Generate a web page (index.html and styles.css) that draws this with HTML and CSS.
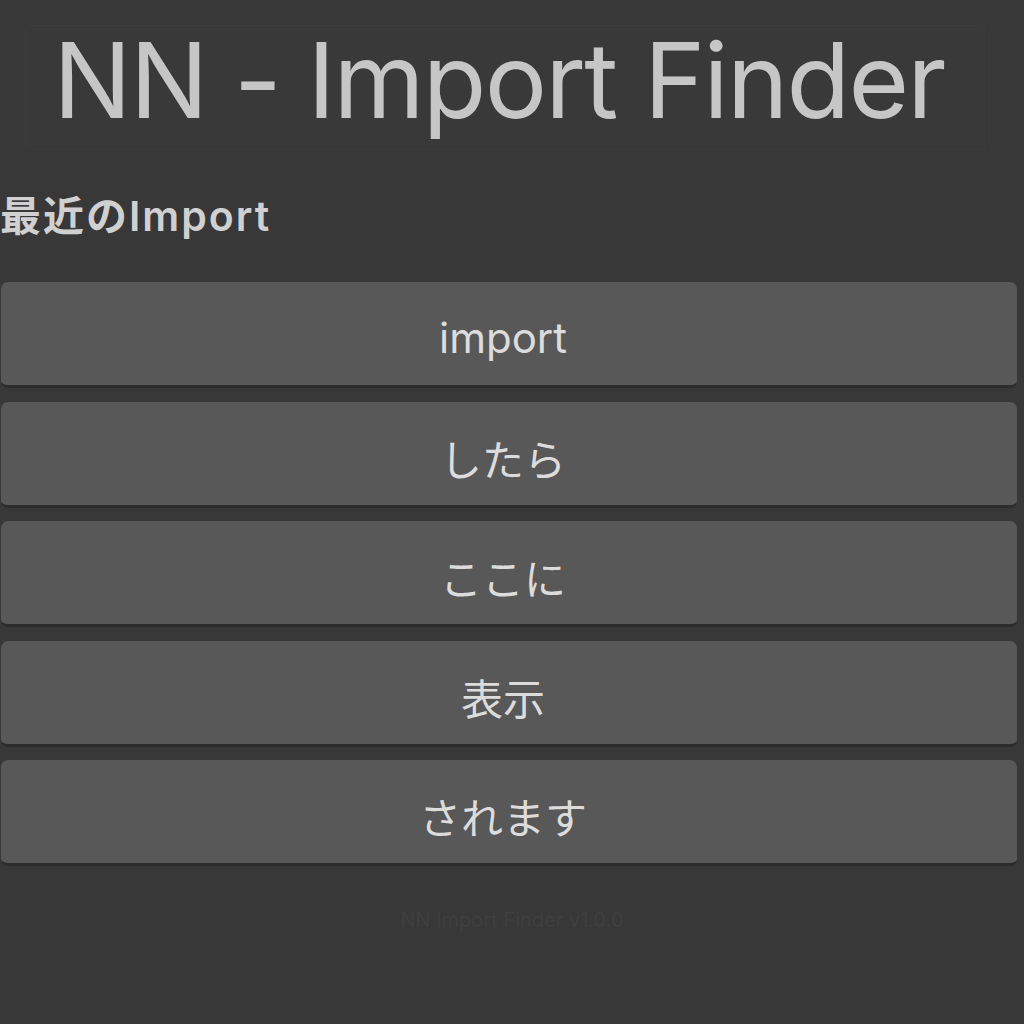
FILE: index.html
```html
<!DOCTYPE html>
<html lang="ja">
<head>
<meta charset="utf-8">
<link rel="stylesheet" href="styles.css">
</head>
<body>
<div class="window">
  <header class="title-box">
    <h1 class="title">NN - Import Finder</h1>
  </header>
  <div class="section-label">最近のImport</div>
  <div class="list">
    <button class="item">import</button>
    <button class="item">したら</button>
    <button class="item">ここに</button>
    <button class="item">表示</button>
    <button class="item">されます</button>
  </div>
  <div class="footer">NN Import Finder v1.0.0</div>
</div>
</body>
</html>
```
FILE: styles.css
```css
html, body {
  margin: 0;
  padding: 0;
  background: #383838;
}
.window {
  width: 1024px;
  height: 1024px;
  background: #383838;
  font-family: Inter, "Noto Sans CJK JP", sans-serif;
  display: flex;
  flex-direction: column;
  overflow: hidden;
}
.title-box {
  margin: 25px 39px 0 25px;
  height: 125px;
  background: #393939;
  border: 1px solid #3c3c3c;
  border-radius: 4px;
  display: flex;
  align-items: center;
  justify-content: center;
  box-sizing: border-box;
}
.title {
  margin: 0;
  font-family: Inter, sans-serif;
  font-weight: 400;
  font-size: 104px;
  letter-spacing: -1.8px;
  color: #c6c6c6;
  line-height: 1;
  padding-bottom: 16px;
  padding-right: 12px;
}
.section-label {
  margin-top: 44px;
  height: 44px;
  line-height: 44px;
  font-family: Inter, "Noto Sans CJK JP", sans-serif;
  font-weight: 600;
  font-size: 41px;
  color: #d0d0d0;
  letter-spacing: 2px;
}
.list {
  margin-top: 44px;
  margin-left: 1px;
  width: 1016px;
  display: flex;
  flex-direction: column;
  gap: 13.5px;
}
.item {
  display: block;
  width: 100%;
  height: 106px;
  background: #585858;
  border: none;
  border-bottom: 3px solid #2c2c2c;
  border-radius: 7px;
  color: #dcdcdc;
  font-family: Inter, "Noto Sans CJK JP", sans-serif;
  font-size: 42px;
  font-weight: 400;
  padding: 8px 12px 0 0;
  box-sizing: border-box;
  text-align: center;
}
.footer {
  margin-top: 42px;
  text-align: center;
  font-family: Inter, sans-serif;
  font-size: 20px;
  color: #3f3f3f;
}
```
